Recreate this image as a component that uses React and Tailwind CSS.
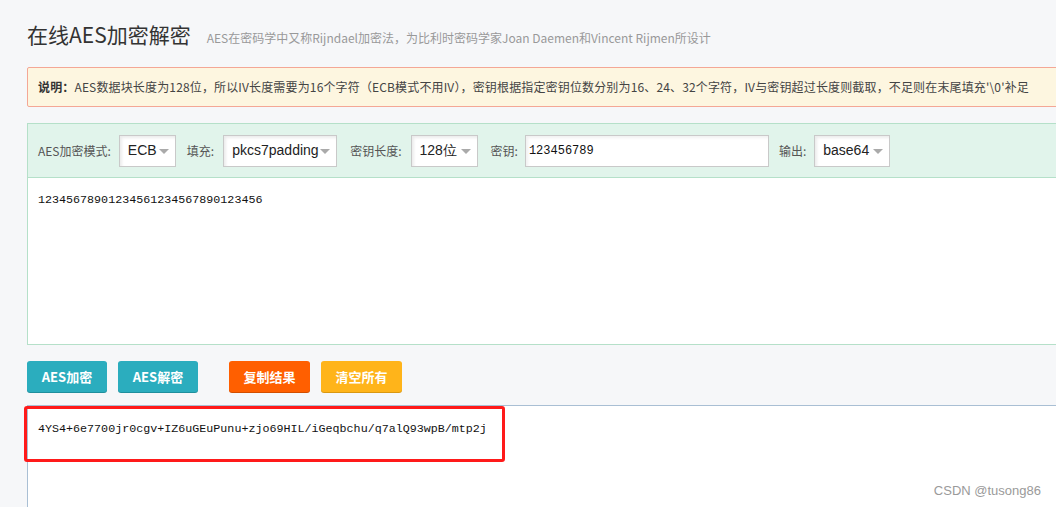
import React from "react";

const cjk = { fontFamily: '"Noto Sans CJK SC", "Noto Sans", sans-serif' };
const mono = { fontFamily: '"Liberation Mono", "DejaVu Sans Mono", monospace' };
const arial = { fontFamily: '"Liberation Sans", Arial, sans-serif' };

function Select({ value, w }) {
  return (
    <div
      className={`relative flex h-[32px] items-center border border-[#c9c9c9] bg-white pl-[8px] text-[14px] text-[#222] shadow-[inset_2px_2px_3px_rgba(0,0,0,0.08)] ${w}`}
      style={arial}
    >
      <span>{value}</span>
      <span className="absolute right-[6px] top-[13px] h-0 w-0 border-x-[5px] border-t-[5px] border-x-transparent border-t-[#aaa]" />
    </div>
  );
}

export default function App() {
  return (
    <div className="relative h-[507px] w-[1056px] overflow-hidden bg-[#f6f7f9] pl-[27px]" style={cjk}>
      <div className="flex items-end pt-[18px]">
        <h1 className="text-[21px] leading-[32px] text-[#333]">在线AES加密解密</h1>
        <span className="ml-[16px] pb-[2px] text-[12px] leading-[20px] text-[#999]">
          AES在密码学中又称Rijndael加密法，为比利时密码学家Joan Daemen和Vincent Rijmen所设计
        </span>
      </div>

      <div className="mt-[17px] mr-[-10px] flex h-[40px] items-center rounded-[2px] border border-[#f4a796] bg-[#fdf6e0] pl-[10px] text-[12px] tracking-[0.15px] text-[#444]">
        <b className="text-[#333]">说明：</b>
        <span>AES数据块长度为128位，所以IV长度需要为16个字符（ECB模式不用IV），密钥根据指定密钥位数分别为16、24、32个字符，IV与密钥超过长度则截取，不足则在末尾填充'\0'补足</span>
      </div>

      <div className="mt-[16px] mr-[-10px] border border-[#b5e0c9]">
        <div className="flex h-[53px] items-center bg-[#e1f4eb] pl-[10px] text-[12px] text-[#555]">
          <span>AES加密模式:</span>
          <div className="ml-[8px]"><Select value="ECB" w="w-[57px]" /></div>
          <span className="ml-[11px]">填充:</span>
          <div className="ml-[9px]"><Select value="pkcs7padding" w="w-[114px]" /></div>
          <span className="ml-[13px]">密钥长度:</span>
          <div className="ml-[9px]"><Select value="128位" w="w-[67px]" /></div>
          <span className="ml-[13px]">密钥:</span>
          <div
            className="ml-[7px] flex h-[32px] w-[244px] items-center border border-[#c9c9c9] bg-white pl-[3px] text-[12px] text-[#111] shadow-[inset_2px_2px_3px_rgba(0,0,0,0.06)]"
            style={mono}
          >
            123456789
          </div>
          <span className="ml-[10px]">输出:</span>
          <div className="ml-[8px]"><Select value="base64" w="w-[76px]" /></div>
        </div>
        <div className="h-[167px] border-t border-[#b5e0c9] bg-white px-[10px] pt-[14px] text-[11.7px] leading-[16px] text-[#111]" style={mono}>
          12345678901234561234567890123456
        </div>
      </div>

      <div className="mt-[16px] flex h-[31px] text-[13px] font-bold text-white">
        <button className="w-[80px] rounded-[3px] bg-[#2badbe] shadow-[0_1px_0_#1f8f9d]">AES加密</button>
        <button className="ml-[11px] w-[80px] rounded-[3px] bg-[#2badbe] shadow-[0_1px_0_#1f8f9d]">AES解密</button>
        <button className="ml-[31px] w-[81px] rounded-[3px] bg-[#ff5f00] shadow-[0_1px_0_#d24e00]">复制结果</button>
        <button className="ml-[11px] w-[81px] rounded-[3px] bg-[#ffb41a] shadow-[0_1px_0_#d99812]">清空所有</button>
      </div>

      <div className="mt-[13px] mr-[-10px] h-[120px] border-l border-t border-[#a9bfd4] bg-white px-[10px] pt-[15px] text-[11.7px] leading-[16px] text-[#111]" style={mono}>
        4YS4+6e7700jr0cgv+IZ6uGEuPunu+zjo69HIL/iGeqbchu/q7alQ93wpB/mtp2j
      </div>

      <div className="absolute left-[24px] top-[406px] h-[56px] w-[481px] rounded-[3px] border-[3px] border-[#ff1a1a]" />

      <div className="absolute right-[15px] top-[481px] text-[13px] text-[#9a9a9a]" style={arial}>
        CSDN @tusong86
      </div>
    </div>
  );
}
